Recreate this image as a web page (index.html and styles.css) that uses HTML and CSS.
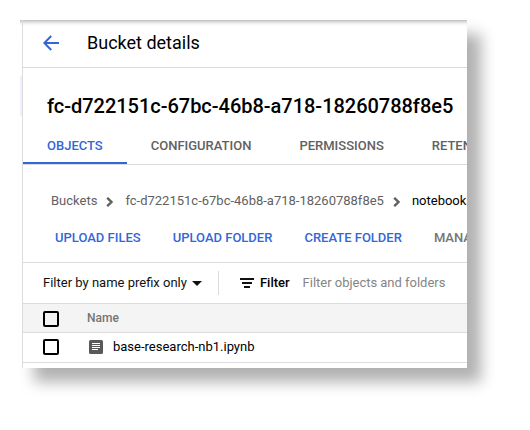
FILE: index.html
```html
<!DOCTYPE html>
<html lang="en">
<head>
<meta charset="utf-8">
<title>Bucket details</title>
<link rel="stylesheet" href="styles.css">
</head>
<body>
<div class="window">
  <div class="rail"><div class="rail-item"></div></div>
  <main class="panel">
    <header class="topbar">
      <svg class="back" width="16" height="16" viewBox="0 0 16 16"><path d="M16 8H1.5M8.2 1L1.3 8l6.9 7" fill="none" stroke="#3367d6" stroke-width="2"/></svg>
      <span class="heading">Bucket details</span>
    </header>
    <h1 class="bucket">fc-d722151c-67bc-46b8-a718-18260788f8e5</h1>
    <nav class="tabs">
      <a class="tab active">OBJECTS</a>
      <a class="tab">CONFIGURATION</a>
      <a class="tab">PERMISSIONS</a>
      <a class="tab">RETENTION</a>
    </nav>
    <nav class="crumbs">
      <span>Buckets</span>
      <svg class="chev" width="8" height="10" viewBox="0 0 8 10"><path d="M1.2 .8L5.5 5 1.2 9.2" fill="none" stroke="#616161" stroke-width="2.4"/></svg>
      <span class="id">fc-d722151c-67bc-46b8-a718-18260788f8e5</span>
      <svg class="chev" width="8" height="10" viewBox="0 0 8 10"><path d="M1.2 .8L5.5 5 1.2 9.2" fill="none" stroke="#616161" stroke-width="2.4"/></svg>
      <span class="current">notebooks</span>
    </nav>
    <div class="actions">
      <span>UPLOAD FILES</span>
      <span>UPLOAD FOLDER</span>
      <span>CREATE FOLDER</span>
      <span class="disabled">MANAGE HOLDS</span>
    </div>
    <div class="filter">
      <span class="prefix">Filter by name prefix only</span>
      <svg class="caret" width="10" height="5" viewBox="0 0 10 5"><path d="M0 0h10L5 5z" fill="#111"/></svg>
      <span class="divider"></span>
      <svg class="funnel" width="14" height="10" viewBox="0 0 14 10"><path d="M0 0h14v2H0zM2 4h10v2H2zM4 8h6v2H4z" fill="#111"/></svg>
      <span class="label">Filter</span>
      <span class="hint">Filter objects and folders</span>
    </div>
    <div class="row head">
      <span class="check"></span>
      <span class="name">Name</span>
    </div>
    <div class="row">
      <span class="check"></span>
      <svg class="doc" width="14" height="14" viewBox="0 0 14 14"><rect width="14" height="14" rx="1.5" fill="#595959"/><path d="M3 3.5h8M3 5.5h8M3 7.5h8M3 9.5h6" stroke="#fff" stroke-width="1"/></svg>
      <span class="file">base-research-nb1.ipynb</span>
    </div>
  </main>
</div>
</body>
</html>
```
FILE: styles.css
```css
* { box-sizing: border-box; }
body {
  min-height: 430px;
  margin: 0;
  padding: 20px;
  background: #fff;
  font: 13px/20px Roboto, sans-serif;
  color: #111;
}
.window {
  display: flex;
  width: 447px;
  height: 348px;
  background: #fff;
  box-shadow: 14px 14px 14px rgba(0, 0, 0, .31);
}
.rail {
  width: 2px;
  padding-top: 56px;
  background: linear-gradient(#bdbdbd, #dedede 2px, #f5f5f5 4px, #fff 6px);
}
.rail-item { height: 40px; background: #edf1fd; }
.panel {
  width: 445px;
  height: 348px;
  overflow: hidden;
  border-left: 1px solid #dcdcdc;
  background: #fff;
  white-space: nowrap;
}
.topbar {
  display: flex;
  align-items: center;
  height: 48px;
  padding: 0 0 2px 20px;
  border-bottom: 1px solid #dcdcdc;
  background: linear-gradient(#bdbdbd, #dedede 2px, #f5f5f5 4px, #fff 6px);
}
.heading { margin-left: 28px; font-size: 18px; color: #000; }
.bucket {
  height: 60px;
  margin: 0;
  padding: 26px 0 0 24px;
  font-size: 20px;
  line-height: 24px;
  font-weight: 500;
  letter-spacing: -.025px;
  color: #000;
}
.tabs {
  display: flex;
  height: 37px;
  border-bottom: 1px solid #dcdcdc;
  font-weight: 500;
  color: #616161;
}
.tab { height: 36px; padding: 8px 24px 0; }
.active { color: #3367d6; border-bottom: 2px solid #3367d6; }
.crumbs {
  display: flex;
  align-items: center;
  height: 53px;
  padding: 19px 0 0 28px;
  color: #616161;
}
.chev { margin: 1px 11px 0 9px; flex: none; }
.current { color: #000; }
.actions {
  display: flex;
  gap: 32px;
  height: 45px;
  padding: 10px 0 0 32px;
  border-bottom: 1px solid #dcdcdc;
  color: #3367d6;
  font-weight: 500;
}
.disabled { color: #757575; }
.filter {
  display: flex;
  align-items: center;
  height: 41px;
  padding-left: 20px;
  border-bottom: 1px solid #dcdcdc;
}
.caret { margin-left: 5px; }
.divider { width: 1px; height: 24px; margin: 0 21px 0 16px; background: #dcdcdc; }
.label { margin-left: 6px; font-weight: 500; color: #000; }
.hint { margin-left: 13px; color: #858585; letter-spacing: -.02px; }
.row {
  display: flex;
  align-items: center;
  height: 30px;
  padding: 0 0 2px 20px;
  border-bottom: 1px solid #dcdcdc;
}
.head { height: 29px; padding-bottom: 0; background: #f4f4f4; }
.check { width: 16px; height: 16px; border: 2px solid #000; border-radius: 2px; }
.head .check { margin-top: 2px; }
.name { margin-left: 28px; font-size: 12px; font-weight: 500; color: #757575; }
.doc { margin-left: 30px; }
.file { margin-left: 10px; color: #000; }
```
